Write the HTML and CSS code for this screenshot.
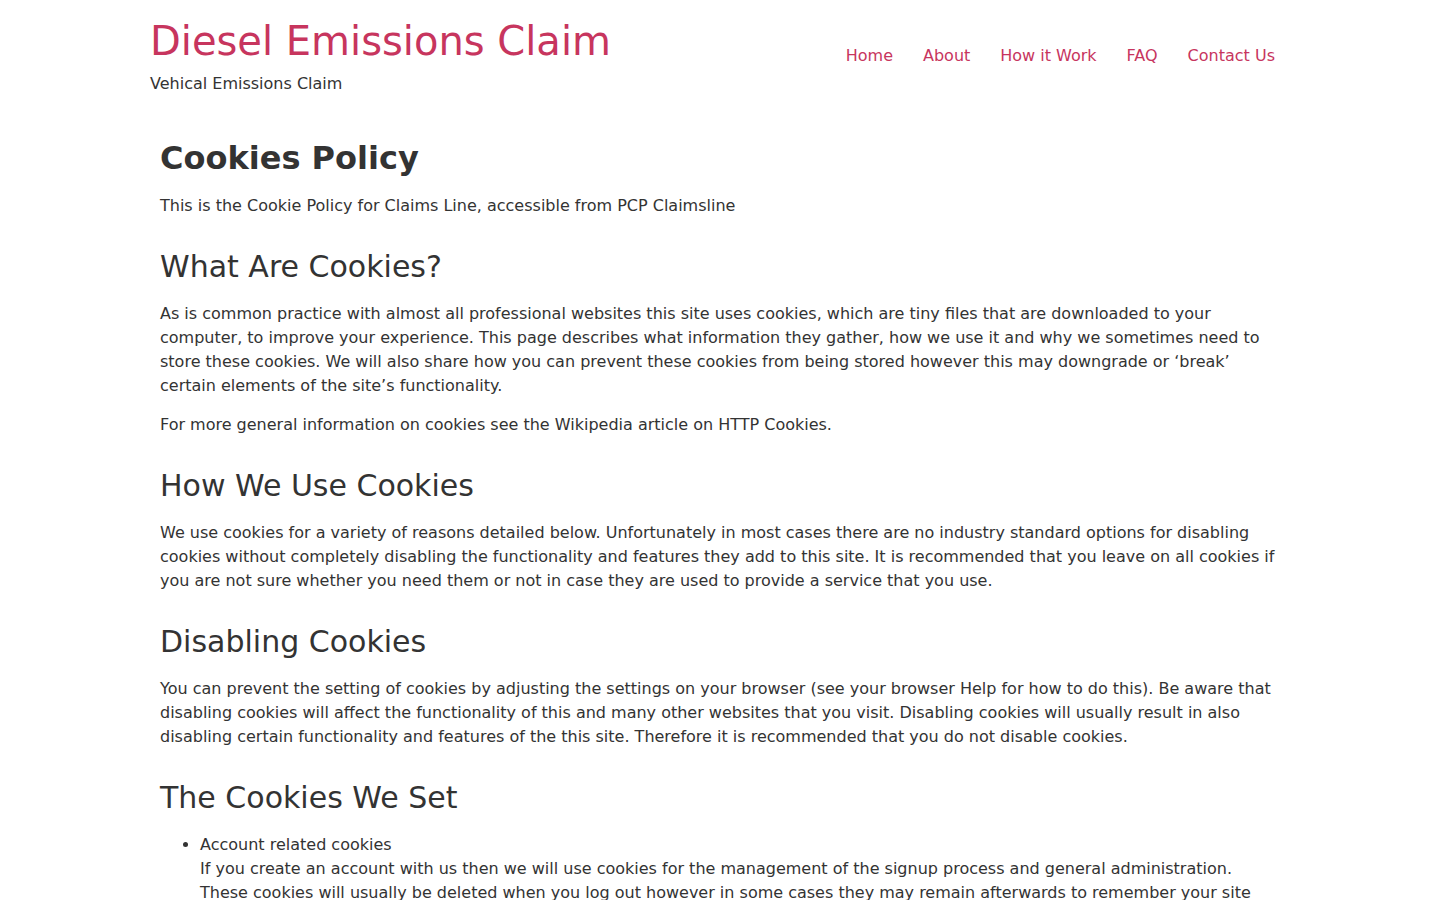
FILE: index.html
```html
<!DOCTYPE html>
<html lang="en">
<head>
  <meta charset="UTF-8">
  <title>Cookies Policy - Diesel Emissions Claim</title>
  <link rel="stylesheet" href="styles.css">
</head>
<body>

<header class="site-header">
  <div class="branding">
    <a class="site-title" href="#">Diesel Emissions Claim</a>
    <p class="site-tagline">Vehical Emissions Claim</p>
  </div>
  <nav class="main-nav">
    <a href="#">Home</a>
    <a href="#">About</a>
    <a href="#">How it Work</a>
    <a href="#">FAQ</a>
    <a href="#">Contact Us</a>
  </nav>
</header>

<main class="content">
  <h1>Cookies Policy</h1>
  <p>This is the Cookie Policy for Claims Line, accessible from PCP Claimsline</p>

  <h2>What Are Cookies?</h2>
  <p>As is common practice with almost all professional websites this site uses cookies, which are tiny files that are downloaded to your computer, to improve your experience. This page describes what information they gather, how we use it and why we sometimes need to store these cookies. We will also share how you can prevent these cookies from being stored however this may downgrade or ‘break’ certain elements of the site’s functionality.</p>
  <p>For more general information on cookies see the Wikipedia article on HTTP Cookies.</p>

  <h2>How We Use Cookies</h2>
  <p>We use cookies for a variety of reasons detailed below. Unfortunately in most cases there are no industry standard options for disabling cookies without completely disabling the functionality and features they add to this site. It is recommended that you leave on all cookies if you are not sure whether you need them or not in case they are used to provide a service that you use.</p>

  <h2>Disabling Cookies</h2>
  <p>You can prevent the setting of cookies by adjusting the settings on your browser (see your browser Help for how to do this). Be aware that disabling cookies will affect the functionality of this and many other websites that you visit. Disabling cookies will usually result in also disabling certain functionality and features of the this site. Therefore it is recommended that you do not disable cookies.</p>

  <h2>The Cookies We Set</h2>
  <ul>
    <li>
      <p>Account related cookies</p>
      <p>If you create an account with us then we will use cookies for the management of the signup process and general administration. These cookies will usually be deleted when you log out however in some cases they may remain afterwards to remember your site preferences when logged out.</p>
    </li>
    <li>
      <p>Login related cookies</p>
      <p>We use cookies when you are logged in so that we can remember this fact. This prevents you from having to log in every single time you visit a new page.</p>
    </li>
  </ul>
</main>

</body>
</html>
```

FILE: styles.css
```css
body {
  margin: 0;
  font-family: "DejaVu Sans", Verdana, sans-serif;
  font-size: 16px;
  line-height: 24px;
  color: #333;
  background: #fff;
}

a {
  color: #c7355e;
  text-decoration: none;
}

.site-header {
  width: 1140px;
  margin: 0 auto;
  padding-top: 17px;
  display: flex;
  justify-content: space-between;
  align-items: flex-start;
}

.site-title {
  display: block;
  font-size: 40px;
  line-height: 48px;
}

.site-tagline {
  margin: 7px 0 0;
}

.main-nav {
  display: flex;
  margin-top: 27px;
}

.main-nav a {
  padding: 0 15px;
}

.content {
  width: 1120px;
  margin: 0 auto;
  padding: 0 10px;
  margin-top: 43px;
}

h1 {
  font-size: 32px;
  line-height: 38px;
  margin: 0 0 17px;
}

h2 {
  font-size: 30px;
  font-weight: normal;
  line-height: 34px;
  margin: 32px 0 18px;
}

p {
  margin: 0 0 15px;
}

ul {
  padding-left: 40px;
  margin: 0;
}

li p {
  margin: 0;
}
```
